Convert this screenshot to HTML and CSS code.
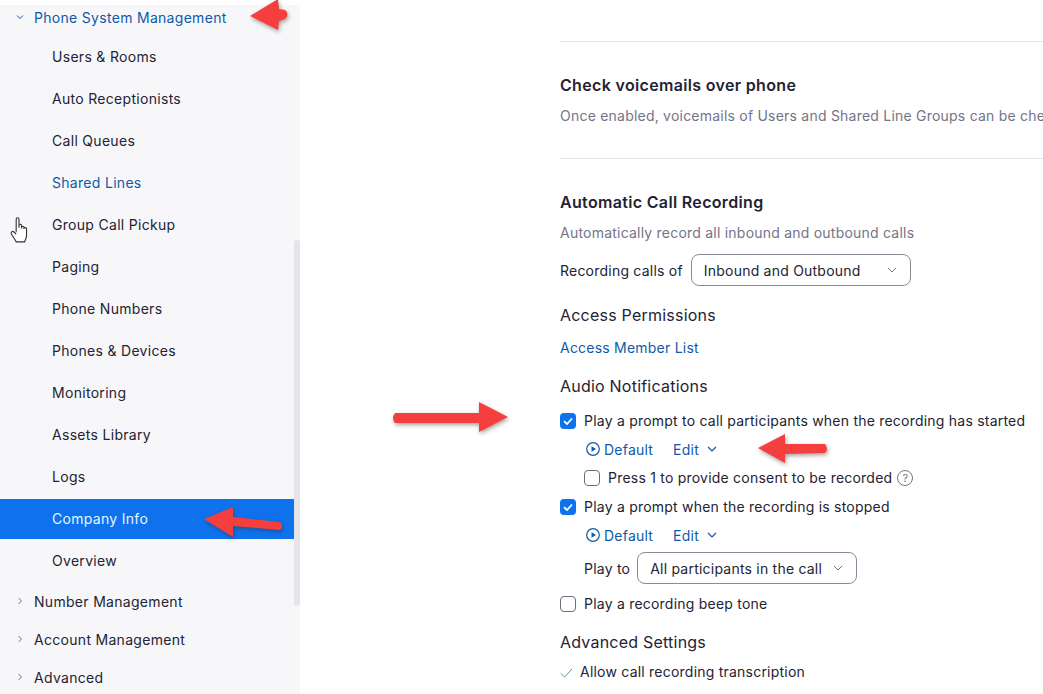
FILE: index.html
```html
<!DOCTYPE html>
<html lang="en">
<head>
    <meta charset="UTF-8">
    <title>Phone System Management</title>
    <link rel="stylesheet" href="styles.css">
</head>
<body>
    <div class="page">
        <nav class="sidebar">
            <div class="nav-group open">
                <svg class="caret" viewBox="0 0 10 10"><path d="M2 3.5 5 6.5 8 3.5"/></svg>
                <span>Phone System Management</span>
            </div>
            <a class="nav-item">Users &amp; Rooms</a>
            <a class="nav-item">Auto Receptionists</a>
            <a class="nav-item">Call Queues</a>
            <a class="nav-item link">Shared Lines</a>
            <a class="nav-item">Group Call Pickup</a>
            <a class="nav-item">Paging</a>
            <a class="nav-item">Phone Numbers</a>
            <a class="nav-item">Phones &amp; Devices</a>
            <a class="nav-item">Monitoring</a>
            <a class="nav-item">Assets Library</a>
            <a class="nav-item">Logs</a>
            <a class="nav-item active">Company Info</a>
            <a class="nav-item">Overview</a>
            <div class="nav-group">
                <svg class="caret" viewBox="0 0 10 10"><path d="M3.5 2 6.5 5 3.5 8"/></svg>
                <span>Number Management</span>
            </div>
            <div class="nav-group">
                <svg class="caret" viewBox="0 0 10 10"><path d="M3.5 2 6.5 5 3.5 8"/></svg>
                <span>Account Management</span>
            </div>
            <div class="nav-group">
                <svg class="caret" viewBox="0 0 10 10"><path d="M3.5 2 6.5 5 3.5 8"/></svg>
                <span>Advanced</span>
            </div>
            <div class="scrollbar"></div>
            <svg class="hand" viewBox="0 0 16 24">
                <path d="M5.5 14V3.2C5.5 1 8 1 8 3.2V10.5M8 10V8.5C8 7 10.3 7 10.3 8.5V11M10.3 10C10.3 8.8 12.4 8.8 12.4 10V11.5M12.4 11C12.4 10 14.7 10 14.7 11.5V17C14.7 20 13.5 21 13 23H5.5C4.8 21 2.8 19 1.2 16 .5 14.500 2 13 3.500 14.200L5.500 16"/>
            </svg>
        </nav>

        <main class="content">
            <hr class="rule">
            <h3 class="title first">Check voicemails over phone</h3>
            <p class="desc">Once enabled, voicemails of Users and Shared Line Groups can be checked over phone</p>
            <hr class="rule second">
            <h3 class="title">Automatic Call Recording</h3>
            <p class="desc">Automatically record all inbound and outbound calls</p>
            <div class="field">
                <span>Recording calls of</span>
                <div class="select">
                    <span>Inbound and Outbound</span>
                    <svg class="select-caret" viewBox="0 0 10 10"><path d="M1 3 5 7 9 3"/></svg>
                </div>
            </div>
            <h4 class="sub perm">Access Permissions</h4>
            <a class="member">Access Member List</a>
            <h4 class="sub audio">Audio Notifications</h4>

            <label class="check first-check">
                <span class="box on"><svg viewBox="0 0 16 16"><path d="M4 8.200 7 11 12 5.500"/></svg></span>
                Play a prompt to call participants when the recording has started
            </label>
            <div class="prompt">
                <a class="play">
                    <svg viewBox="0 0 16 16"><circle cx="8" cy="8" r="6.300"/><path class="tri" d="M6.500 5.200 11 8 6.500 10.800Z"/></svg>
                    Default
                </a>
                <a class="edit">Edit <svg viewBox="0 0 10 10"><path d="M1 3 5 7 9 3"/></svg></a>
            </div>
            <label class="check indented">
                <span class="box"></span>
                Press 1 to provide consent to be recorded
                <span class="help">?</span>
            </label>
            <label class="check">
                <span class="box on"><svg viewBox="0 0 16 16"><path d="M4 8.200 7 11 12 5.500"/></svg></span>
                Play a prompt when the recording is stopped
            </label>
            <div class="prompt">
                <a class="play">
                    <svg viewBox="0 0 16 16"><circle cx="8" cy="8" r="6.300"/><path class="tri" d="M6.500 5.200 11 8 6.500 10.800Z"/></svg>
                    Default
                </a>
                <a class="edit">Edit <svg viewBox="0 0 10 10"><path d="M1 3 5 7 9 3"/></svg></a>
            </div>
            <div class="field play-to">
                <span>Play to</span>
                <div class="select">
                    <span>All participants in the call</span>
                    <svg class="select-caret" viewBox="0 0 10 10"><path d="M1 3 5 7 9 3"/></svg>
                </div>
            </div>
            <label class="check beep">
                <span class="box"></span>
                Play a recording beep tone
            </label>
            <h4 class="sub advanced">Advanced Settings</h4>
            <div class="allowed">
                <svg viewBox="0 0 14 14"><path d="M1 8 5 12 13 3"/></svg>
                Allow call recording transcription
            </div>
        </main>
    </div>

    <!-- red annotation arrows drawn over the screenshot -->
    <svg class="arrow arrow-top" viewBox="0 0 44 38"><path d="M2 18 30 1 31 11 37 12Q42 16 37 21L31 23 30 32Z"/></svg>
    <svg class="arrow arrow-company" viewBox="0 0 84 34"><path d="M1 14 30 2V12L77 17Q81 21 77 25L30 21V32Z"/></svg>
    <svg class="arrow arrow-audio" viewBox="0 0 122 34"><path d="M119 17 90 2V13H6Q2 18 6 23H90V32Z"/></svg>
    <svg class="arrow arrow-edit" viewBox="0 0 74 34"><path d="M1 16 28 2V12H68Q72 17 68 21L28 22V31Z"/></svg>
</body>
</html>
```

FILE: styles.css
```css
* {
    box-sizing: border-box;
}

html, body {
    margin: 0;
    padding: 0;
    height: 694px;
    overflow: hidden;
    background-color: #fff;
}

body {
    font-family: Inter, "Liberation Sans", sans-serif;
    font-size: 14px;
    letter-spacing: 0.22px;
    color: #232333;
    position: relative;
}

.page {
    display: flex;
    height: 694px;
    padding-top: 5px;
}

/* sidebar */
.sidebar {
    position: relative;
    width: 300px;
    flex-shrink: 0;
    padding-right: 6px;
    background-color: #f7f7fa;
    letter-spacing: 0.3px;
}

.nav-group {
    display: flex;
    align-items: center;
    height: 38px;
    padding-left: 15px;
    padding-bottom: 2px;
    gap: 9px;
}

.nav-group.open {
    height: 26px;
    margin-bottom: 5px;
    color: #0e5aa8;
}

.caret {
    width: 10px;
    height: 10px;
    fill: none;
    stroke: #6e7680;
    stroke-width: 1;
}

.open .caret {
    stroke: #0e5aa8;
}

.nav-item {
    display: flex;
    align-items: center;
    height: 42px;
    padding-left: 52px;
    padding-bottom: 2px;
}

.nav-item.link {
    color: #0e5aa8;
}

.nav-item.active {
    height: 40px;
    margin: 1px 0;
    background-color: #0e72ed;
    color: #e6f4ff;
}

.nav-item.active + .nav-item {
    height: 42px;
    margin-bottom: 1px;
}

.scrollbar {
    position: absolute;
    top: 235px;
    right: 0;
    width: 6px;
    height: 366px;
    border-radius: 3px;
    background-color: #e4e4ea;
}

.hand {
    position: absolute;
    left: 10px;
    top: 211px;
    width: 18px;
    height: 27px;
    fill: #fff;
    stroke: #333;
    stroke-width: 1;
}

/* settings */
.content {
    flex: 1;
    min-width: 0;
    padding-left: 260px;
    white-space: nowrap;
    overflow: hidden;
}

.rule {
    margin: 36px 0 0;
    border: none;
    border-top: 1px solid #e4e4ea;
}

.rule.second {
    margin-top: 32px;
}

.title {
    margin: 32px 0 0;
    font-size: 16px;
    line-height: 22px;
    font-weight: 600;
    letter-spacing: 0.33px;
}

.desc {
    margin: 10px 0 0;
    line-height: 20px;
    color: #747487;
}

.field {
    display: flex;
    align-items: center;
    gap: 8px;
    margin-top: 11px;
}

.select {
    display: flex;
    align-items: center;
    justify-content: space-between;
    width: 220px;
    height: 32px;
    padding: 0 13px 0 12px;
    border: 1px solid #8a8a99;
    border-radius: 8px;
}

.select-caret {
    width: 10px;
    height: 10px;
    fill: none;
    stroke: #6e7680;
    stroke-width: 1;
}

.sub {
    margin: 17px 0 0;
    font-size: 16px;
    line-height: 22px;
    font-weight: 400;
}

.sub.perm {
    margin-top: 18px;
}

.sub.advanced {
    margin-top: 13px;
}

.member {
    display: block;
    margin-top: 12px;
    line-height: 20px;
    color: #0e5aa8;
}

.check {
    display: flex;
    align-items: center;
    gap: 8px;
    height: 29px;
}

.check.first-check {
    margin-top: 9px;
}

.check.indented {
    margin-left: 24px;
}

.check.beep {
    margin-top: 5px;
}

.box {
    display: block;
    width: 16px;
    height: 16px;
    border: 1px solid #6e6e7a;
    border-radius: 4px;
    background-color: #fff;
}

.box.on {
    border: none;
    background-color: #0e72ed;
}

.box svg {
    display: block;
    width: 16px;
    height: 16px;
    fill: none;
    stroke: #fff;
    stroke-width: 1.800;
}

.help {
    display: flex;
    align-items: center;
    justify-content: center;
    width: 16px;
    height: 16px;
    margin-left: -3px;
    border: 1px solid #747487;
    border-radius: 50%;
    font-size: 11px;
    color: #747487;
}

.prompt {
    display: flex;
    align-items: center;
    gap: 20px;
    height: 28px;
    margin-left: 25px;
    color: #0e5aa8;
}

.play, .edit {
    display: flex;
    align-items: center;
    gap: 3px;
}

.play svg {
    width: 16px;
    height: 16px;
    fill: none;
    stroke: #0e5aa8;
    stroke-width: 1.200;
}

.play .tri {
    fill: #0e5aa8;
    stroke: none;
}

.edit {
    gap: 8px;
}

.edit svg {
    width: 10px;
    height: 10px;
    fill: none;
    stroke: #0e5aa8;
    stroke-width: 1.200;
}

.field.play-to {
    gap: 7px;
    margin: 3px 0 0 24px;
}

.allowed {
    display: flex;
    align-items: center;
    gap: 7px;
    margin-top: 9px;
    line-height: 20px;
}

.allowed svg {
    width: 13px;
    height: 13px;
    fill: none;
    stroke: #4f9a72;
    stroke-width: 1;
}

/* annotations */
.arrow {
    position: absolute;
    fill: #f53f3f;
    filter: drop-shadow(1px 2px 2px rgba(60, 40, 40, 0.45));
}

.arrow-top {
    left: 248px;
    top: -2px;
    width: 44px;
    height: 38px;
}

.arrow-company {
    left: 203px;
    top: 505px;
    width: 84px;
    height: 34px;
}

.arrow-audio {
    left: 389px;
    top: 400px;
    width: 122px;
    height: 34px;
}

.arrow-edit {
    left: 757px;
    top: 432px;
    width: 74px;
    height: 34px;
}
```
